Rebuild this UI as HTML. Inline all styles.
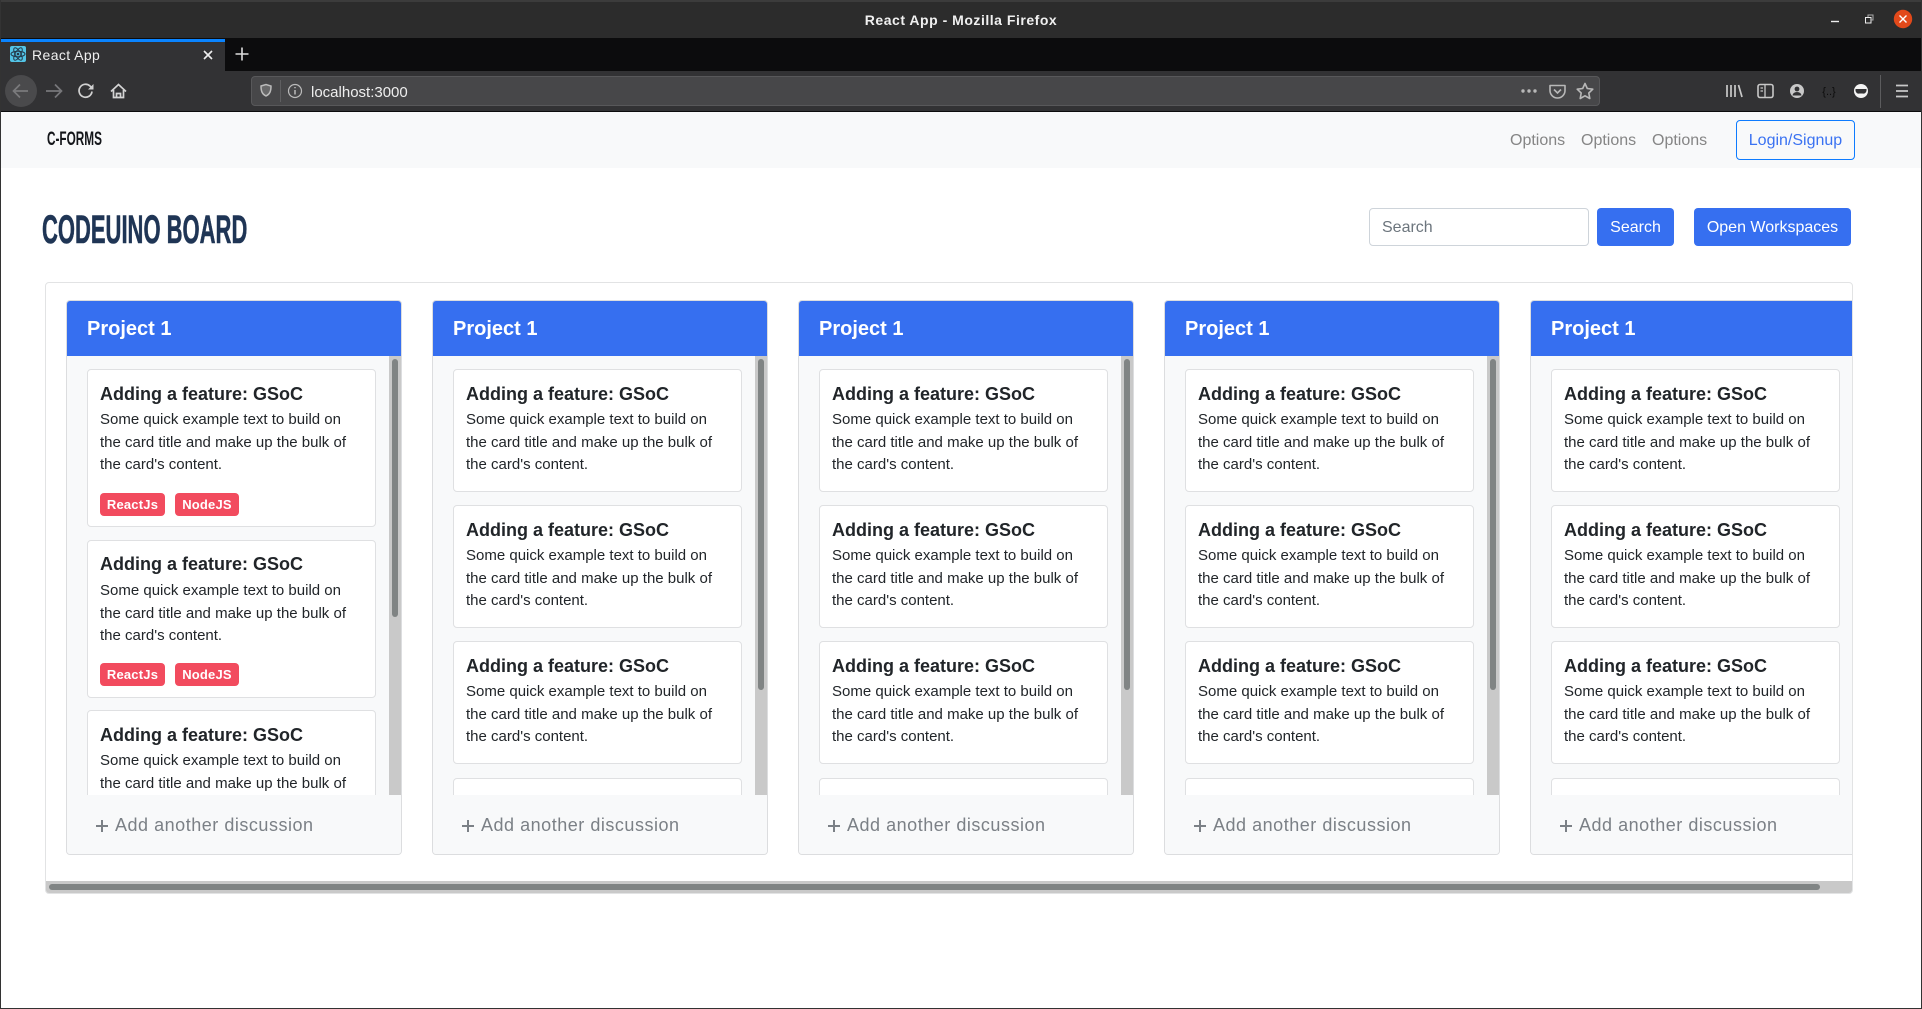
<!DOCTYPE html>
<html><head><meta charset="utf-8"><title>React App</title>
<style>
*{box-sizing:border-box}
html,body{margin:0;padding:0;width:1922px;height:1009px;overflow:hidden;background:#fff;font-family:"Liberation Sans",sans-serif;color:#212529}
.a{position:absolute}
#frame{position:absolute;left:0;top:0;width:1922px;height:1009px;border:1px solid #333;border-top:0;pointer-events:none;z-index:9}
#chrome{position:absolute;left:0;top:0;width:1922px;height:112px;background:#323234}
#title{position:absolute;left:0;top:0;width:1922px;height:38px;background:#2c2c2c;border-top:2px solid #3c3c3c;color:#f0f0f0;font-weight:700;font-size:14px;text-align:center;line-height:36px;letter-spacing:.52px}
#tabs{position:absolute;left:0;top:38px;width:1922px;height:33px;background:#0c0c0d}
#tab{position:absolute;left:1px;top:1px;width:224px;height:32px;background:#323234;border-top:3px solid #0a84ff;color:#f0f0f0;font-size:14px;line-height:27px;padding-left:31px;letter-spacing:.4px}
#url{position:absolute;left:251px;top:76px;width:1349px;height:30px;background:#474749;border:1px solid #58585a;border-radius:4px;color:#eee;font-size:15px;line-height:31px;padding-left:59px}
#nav{position:absolute;left:0;top:112px;width:1922px;height:56px;background:#f8f9fa}
.opt{position:absolute;top:17px;font-size:16px;line-height:24px;color:#858585}
#login{position:absolute;left:1736px;top:8px;width:119px;height:40px;border:1px solid #0d7bff;border-radius:4px;color:#3a72f2;font-size:16px;line-height:40px;text-align:center}
.cond{position:absolute;transform-origin:0 0;font-weight:700;white-space:nowrap}
#in{position:absolute;left:1369px;top:208px;width:220px;height:38px;border:1px solid #ced4da;border-radius:4px;font-size:16px;line-height:38px;padding-left:12px;color:#6c757d;background:#fff}
.btn{position:absolute;top:208px;height:38px;background:#366ff0;border-radius:4px;color:#fff;font-size:16px;line-height:40px;text-align:center}
#board{position:absolute;left:45px;top:282px;width:1808px;height:612px;border:1px solid #e2e3e4;border-radius:4px;overflow:hidden;background:#fff}
.col{position:absolute;top:17px;width:336px;height:555px;background:#f8f9fa;border:1px solid #dcdddf;border-radius:4px;overflow:hidden}
.hd{position:absolute;left:-1px;top:-1px;width:336px;height:56px;background:#366ff0;color:#fff;font-weight:700;font-size:20px;line-height:58px;padding-left:21px}
.list{position:absolute;left:0;top:55px;width:334px;height:439px;overflow:hidden}
.track{position:absolute;left:322px;top:55px;width:12px;height:439px;background:#c9c9c9}
.thumb{position:absolute;left:3px;top:3px;width:6px;background:#808484;border-radius:3px}
.card{position:absolute;left:20px;width:289px;height:123px;background:#fff;border:1px solid #dfe0e2;border-radius:4px}
.tg{height:158px}
.card b{position:absolute;left:12px;top:13px;font-size:18px;line-height:22px;color:#212529;white-space:nowrap}
.card p{position:absolute;left:12px;top:39px;margin:0;font-size:15px;line-height:22.5px;width:265px;color:#212529}
.tag{position:absolute;top:123px;height:23px;background:#f24b5e;color:#fff;border-radius:4px;font-size:13px;font-weight:700;line-height:23px;text-align:center;letter-spacing:.2px}
.add{position:absolute;left:0;top:494px;width:334px;height:60px;background:#f8f9fa;color:#7b8086;font-size:18px;line-height:24px}
.add span{position:absolute;left:48px;top:18px;white-space:nowrap;letter-spacing:.52px}
.add i{position:absolute;left:29px;top:30px;width:12px;height:2px;background:#7b8086}
.add i:after{content:"";position:absolute;left:5px;top:-5px;width:2px;height:12px;background:#7b8086}
#hb{position:absolute;left:0;top:598px;width:1806px;height:13px;background:#c9c9c9}
#hb div{position:absolute;left:3px;top:3px;width:1771px;height:6px;background:#808484;border-radius:3px}
</style></head><body>

<div id="chrome">
<div id="title">React App - Mozilla Firefox</div>
<div id="tabs"><div id="tab">React App</div></div>
<div id="url">localhost:3000</div>
<svg class="a" style="left:0;top:0" width="1922" height="112" viewBox="0 0 1922 112" fill="none">
<!-- window controls -->
<path d="M1831 21.5h8" stroke="#eee" stroke-width="1.4"/>
<rect x="1865.5" y="17.5" width="5.5" height="5.5" stroke="#eee"/>
<path d="M1868 17v-2h5v5h-2" stroke="#aaa"/>
<circle cx="1903" cy="19" r="9.2" fill="#e2491a"/>
<path d="M1899.5 15.5l7 7m0-7l-7 7" stroke="#fff" stroke-width="1.4"/>
<!-- favicon -->
<rect x="10" y="46" width="16" height="16" rx="2" fill="#53c4e6"/>
<g stroke="#24394a" stroke-width="1"><ellipse cx="18" cy="54" rx="7" ry="2.8"/><ellipse cx="18" cy="54" rx="7" ry="2.8" transform="rotate(60 18 54)"/><ellipse cx="18" cy="54" rx="7" ry="2.8" transform="rotate(120 18 54)"/></g>
<circle cx="18" cy="54" r="1.3" fill="#24394a"/>
<!-- tab close / new -->
<path d="M204 51l8 8m0-8l-8 8" stroke="#eee" stroke-width="1.6"/>
<path d="M242 47.5v13M235.500 54h13" stroke="#ddd" stroke-width="1.6"/>
<!-- nav -->
<circle cx="21" cy="91" r="16" fill="#4a4a4c"/>
<path d="M28 91H14m6-6.500L13.500 91l6.500 6.500" stroke="#7a7a7c" stroke-width="1.7"/>
<path d="M46 91h15m-6-6.500l6.500 6.500-6.500 6.500" stroke="#77777a" stroke-width="1.7"/>
<path d="M92 91.500a6.500 6.500 0 1 1-2-5.500l2.500 2.500" stroke="#d0d0d0" stroke-width="1.7"/>
<path d="M93.500 84v5.500H88z" fill="#d0d0d0"/>
<path d="M111 91.500l7.500-7 7.500 7M113.500 90v7.500h10V90M116.500 97.500v-4h4v4" stroke="#d4d4d4" stroke-width="1.7"/>
<!-- url left -->
<path d="M261 86l5-1.500 5 1.500c0 5-1 8-5 10-4-2-5-5-5-10z" stroke="#bbb" stroke-width="1.5" fill="#8a8a8a" fill-opacity=".5"/>
<path d="M280.500 80v22" stroke="#5f5f61"/>
<circle cx="295" cy="91" r="6.500" stroke="#bbb" stroke-width="1.2"/>
<path d="M295 90v4.500M295 87v1.300" stroke="#ccc" stroke-width="1.300"/>
<!-- url right -->
<g fill="#b8b8b8"><circle cx="1523" cy="91" r="1.700"/><circle cx="1529" cy="91" r="1.700"/><circle cx="1535" cy="91" r="1.700"/></g>
<path d="M1550 85.500h15v5a7.500 7.500 0 0 1-15 0z" stroke="#b8b8b8" stroke-width="1.600" stroke-linejoin="round"/>
<path d="M1554 89.500l3.500 3.500 3.500-3.500" stroke="#b8b8b8" stroke-width="1.600"/>
<path d="M1585 83.500l2.300 5 5.500.7-4 3.800 1 5.500-4.800-2.700-4.800 2.700 1-5.500-4-3.800 5.500-.7z" stroke="#b8b8b8" stroke-width="1.600" stroke-linejoin="round"/>
<!-- right toolbar -->
<path d="M1727 85v12M1731 85v12M1735 85v12M1738.500 85l3.500 12" stroke="#c8c8c8" stroke-width="1.700"/>
<rect x="1758" y="84.500" width="15" height="13" rx="2" stroke="#c8c8c8" stroke-width="1.600"/>
<path d="M1765 85v12M1760.500 88h2.500M1760.500 91h2.500" stroke="#c8c8c8" stroke-width="1.300"/>
<circle cx="1797" cy="91" r="7" fill="#c8c8c8"/>
<circle cx="1797" cy="89" r="2.400" fill="#323234"/>
<path d="M1792.500 95.500a4.500 3.500 0 0 1 9 0z" fill="#323234"/>
<text x="1829" y="95" text-anchor="middle" font-family="'Liberation Sans',sans-serif" font-size="11" fill="#0c0c0c">{..}</text>
<circle cx="1861" cy="91" r="7" fill="#f4f4f4"/>
<path d="M1855.500 89h11v2c-1 2.500-2.500 3-4 2.500h-3c-1.500.5-3 0-4-2.500z" fill="#323234"/>
<path d="M1880.500 75v33" stroke="#5c5c5e"/>
<path d="M1896 85.500h12M1896 91h12M1896 96.500h12" stroke="#c8c8c8" stroke-width="1.700"/>
</svg>
<div class="a" style="left:0;top:111px;width:1922px;height:1px;background:#0c0c0d"></div>
</div>

<div id="nav">
<div class="cond" style="left:47px;top:17px;font-size:19px;line-height:22px;color:#14161a;transform:scaleX(.62)">C-FORMS</div>
<div class="opt" style="left:1510px">Options</div>
<div class="opt" style="left:1581px">Options</div>
<div class="opt" style="left:1652px">Options</div>
<div id="login">Login/Signup</div>
</div>

<div class="cond" style="left:42px;top:207px;font-size:40px;line-height:46px;color:#1f3555;-webkit-text-stroke:.6px #1f3555;transform:scaleX(.55)">CODEUINO BOARD</div>

<div id="in">Search</div>
<div class="btn" style="left:1597px;width:77px">Search</div>
<div class="btn" style="left:1694px;width:157px">Open Workspaces</div>

<div id="board">

<div class="col" style="left:20px">
<div class="hd">Project 1</div>
<div class="list">
<div class="card tg" style="top:13px"><b>Adding a feature: GSoC</b><p>Some quick example text to build on the card title and make up the bulk of the card's content.</p><div class="tag" style="left:12px;width:65px">ReactJs</div><div class="tag" style="left:87px;width:64px">NodeJS</div></div>
<div class="card tg" style="top:184px"><b style="top:12px">Adding a feature: GSoC</b><p>Some quick example text to build on the card title and make up the bulk of the card's content.</p><div class="tag" style="left:12px;width:65px;top:122px">ReactJs</div><div class="tag" style="left:87px;width:64px;top:122px">NodeJS</div></div>
<div class="card tg" style="top:354px"><b>Adding a feature: GSoC</b><p>Some quick example text to build on the card title and make up the bulk of the card's content.</p></div>
</div>
<div class="track"><div class="thumb" style="height:258px"></div></div>
<div class="add"><i></i><span>Add another discussion</span></div>
</div>

<div class="col" style="left:386px">
<div class="hd">Project 1</div>
<div class="list">
<div class="card" style="top:13px"><b>Adding a feature: GSoC</b><p>Some quick example text to build on the card title and make up the bulk of the card's content.</p></div>
<div class="card" style="top:149px"><b>Adding a feature: GSoC</b><p>Some quick example text to build on the card title and make up the bulk of the card's content.</p></div>
<div class="card" style="top:285px"><b>Adding a feature: GSoC</b><p>Some quick example text to build on the card title and make up the bulk of the card's content.</p></div>
<div class="card" style="top:422px"></div>
</div>
<div class="track"><div class="thumb" style="height:331px"></div></div>
<div class="add"><i></i><span>Add another discussion</span></div>
</div>

<div class="col" style="left:752px">
<div class="hd">Project 1</div>
<div class="list">
<div class="card" style="top:13px"><b>Adding a feature: GSoC</b><p>Some quick example text to build on the card title and make up the bulk of the card's content.</p></div>
<div class="card" style="top:149px"><b>Adding a feature: GSoC</b><p>Some quick example text to build on the card title and make up the bulk of the card's content.</p></div>
<div class="card" style="top:285px"><b>Adding a feature: GSoC</b><p>Some quick example text to build on the card title and make up the bulk of the card's content.</p></div>
<div class="card" style="top:422px"></div>
</div>
<div class="track"><div class="thumb" style="height:331px"></div></div>
<div class="add"><i></i><span>Add another discussion</span></div>
</div>

<div class="col" style="left:1118px">
<div class="hd">Project 1</div>
<div class="list">
<div class="card" style="top:13px"><b>Adding a feature: GSoC</b><p>Some quick example text to build on the card title and make up the bulk of the card's content.</p></div>
<div class="card" style="top:149px"><b>Adding a feature: GSoC</b><p>Some quick example text to build on the card title and make up the bulk of the card's content.</p></div>
<div class="card" style="top:285px"><b>Adding a feature: GSoC</b><p>Some quick example text to build on the card title and make up the bulk of the card's content.</p></div>
<div class="card" style="top:422px"></div>
</div>
<div class="track"><div class="thumb" style="height:331px"></div></div>
<div class="add"><i></i><span>Add another discussion</span></div>
</div>

<div class="col" style="left:1484px">
<div class="hd">Project 1</div>
<div class="list">
<div class="card" style="top:13px"><b>Adding a feature: GSoC</b><p>Some quick example text to build on the card title and make up the bulk of the card's content.</p></div>
<div class="card" style="top:149px"><b>Adding a feature: GSoC</b><p>Some quick example text to build on the card title and make up the bulk of the card's content.</p></div>
<div class="card" style="top:285px"><b>Adding a feature: GSoC</b><p>Some quick example text to build on the card title and make up the bulk of the card's content.</p></div>
<div class="card" style="top:422px"></div>
</div>
<div class="track"><div class="thumb" style="height:331px"></div></div>
<div class="add"><i></i><span>Add another discussion</span></div>
</div>

<div id="hb"><div></div></div>
</div>

<div id="frame"></div>
</body></html>
